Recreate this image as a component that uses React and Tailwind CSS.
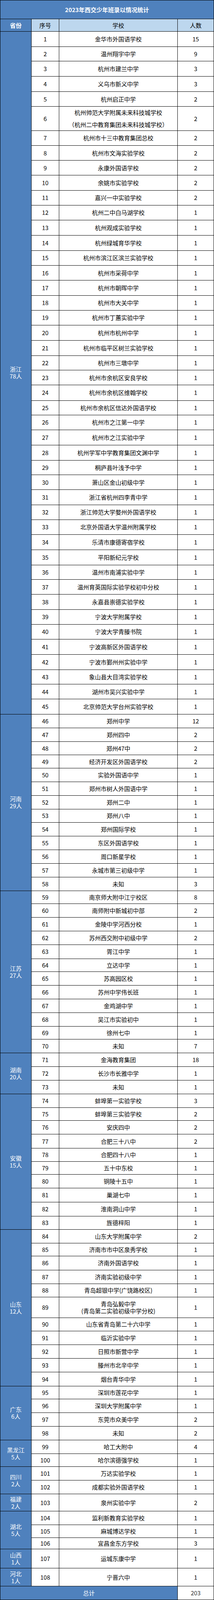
import React from "react";

const bottoms = [
  135, 178, 222, 266, 310, 380, 423, 467, 510, 554, 597, 641, 685, 729, 773,
  816, 860, 903, 947, 991, 1035, 1078, 1121, 1166, 1208, 1252, 1296, 1340, 1383,
  1426, 1470, 1513, 1557, 1601, 1645, 1688, 1731, 1775, 1818, 1862, 1906, 1950,
  1993, 2036, 2080, 2120, 2160, 2199, 2237, 2277, 2317, 2357, 2395, 2435, 2475,
  2515, 2555, 2594, 2632, 2672, 2712, 2752, 2792, 2830, 2870, 2910, 2950, 2989,
  3027, 3067, 3107, 3147, 3186, 3226, 3264, 3304, 3344, 3383, 3421, 3461, 3501,
  3542, 3581, 3621, 3659, 3699, 3739, 3778, 3838, 3877, 3917, 3957, 3997, 4037,
  4075, 4115, 4155, 4195, 4234, 4272, 4312, 4352, 4402, 4441, 4479, 4512, 4568,
  4620,
];

const groups = [
  {
    name: "浙江",
    total: "78人",
    rows: [
      ["金华市外国语学校", 15],
      ["温州翔宇中学", 9],
      ["杭州市建兰中学", 3],
      ["义乌市新义中学", 3],
      ["杭州启正中学", 2],
      [["杭州帅范大学附属未来科技城学校", "（杭州二中教育集团未来科技城学校）"], 2],
      ["杭州市十三中教育集团总校", 2],
      ["杭州市文海实验学校", 2],
      ["永康外国语学校", 2],
      ["余姚市实验学校", 2],
      ["嘉兴一中实验学校", 2],
      ["杭州二中白马湖学校", 1],
      ["杭州观成实验学校", 1],
      ["杭州绿城育华学校", 1],
      ["杭州市滨江区滨兰实验学校", 1],
      ["杭州市采荷中学", 1],
      ["杭州市朝晖中学", 1],
      ["杭州市大关中学", 1],
      ["杭州市丁蕙实验中学", 1],
      ["杭州市杭州中学", 1],
      ["杭州市临平区树兰实验学校", 1],
      ["杭州市三墩中学", 1],
      ["杭州市余杭区安良学校", 1],
      ["杭州市余杭区维翰学校", 1],
      ["杭州市余杭区信达外国语学校", 1],
      ["杭州市之江第一中学", 1],
      ["杭州市之江实验中学", 1],
      ["杭州学军中学教育集团文渊中学", 1],
      ["桐庐县叶浅予中学", 1],
      ["萧山区金山初级中学", 1],
      ["浙江省杭州四李青中学", 1],
      ["浙江帅范大学婺州外国语学校", 1],
      ["北京外国语大学温州附属学校", 1],
      ["乐清市康德寄宿学校", 1],
      ["平阳新纪元学校", 1],
      ["温州市南浦实验中学", 1],
      ["温州育英国际实验学校初中分校", 1],
      ["永嘉县崇德实验学校", 1],
      ["宁波大学附属学校", 1],
      ["宁波大学青滕书院", 1],
      ["宁波高新区外国语学校", 1],
      ["宁波市鄞州州实验中学", 1],
      ["象山县大目湾实验学校", 1],
      ["湖州市吴兴实验中学", 1],
      ["北京帅范大学台州实验学校", 1],
    ],
  },
  {
    name: "河南",
    total: "29人",
    rows: [
      ["郑州中学", 12],
      ["郑州四中", 2],
      ["郑州47中", 2],
      ["经济开发区外国语学校", 2],
      ["实验外国语中学", 1],
      ["郑州市树人外国语中学", 1],
      ["郑州二中", 1],
      ["郑州八中", 1],
      ["郑州国际学校", 1],
      ["东区外国语学校", 1],
      ["周口新星学校", 1],
      ["永城市第三初级中学", 1],
      ["未知", 3],
    ],
  },
  {
    name: "江苏",
    total: "27人",
    rows: [
      ["南京师大附中江宁校区", 8],
      ["南师附中新城初中部", 2],
      ["金陵中学河西分校", 1],
      ["苏州西交附中初级中学", 2],
      ["胥江中学", 1],
      ["立达中学", 1],
      ["苏高园区校", 1],
      ["苏州中学伟长班", 1],
      ["金鸡湖中学", 1],
      ["吴江市实验初中", 1],
      ["徐州七中", 1],
      ["未知", 7],
    ],
  },
  {
    name: "湖南",
    total: "20人",
    rows: [
      ["金海教育集团", 18],
      ["长沙市长雅中学", 1],
      ["未知", 1],
    ],
  },
  {
    name: "安徽",
    total: "15人",
    rows: [
      ["蚌埠第一实验学校", 3],
      ["蚌埠第三实验学校", 2],
      ["安庆四中", 2],
      ["合肥三十八中", 2],
      ["合肥四十八中", 1],
      ["五十中东校", 1],
      ["铜陵十五中", 1],
      ["巢湖七中", 1],
      ["淮南洞山中学", 1],
      ["旌德梓阳", 1],
    ],
  },
  {
    name: "山东",
    total: "12人",
    rows: [
      ["山东大学附属中学", 2],
      ["济南市市中区泉秀学校", 1],
      ["济南外国语学校", 1],
      ["济南实验初级中学", 1],
      ["青岛超银中学(广饶路校区)", 1],
      [["青岛弘毅中学", "(青岛第二实验初级中学分校)"], 1],
      ["山东省青岛第二十六中学", 1],
      ["临沂实验中学", 1],
      ["日照市新营中学", 1],
      ["滕州市北辛中学", 1],
      ["烟台青华中学", 1],
    ],
  },
  {
    name: "广东",
    total: "6人",
    rows: [
      ["深圳市莲花中学", 1],
      ["深圳大学附属中学", 1],
      ["东莞市众美中学", 2],
      ["未知", 2],
    ],
  },
  {
    name: "黑龙江",
    total: "5人",
    rows: [
      ["哈工大附中", 4],
      ["哈尔滨德强学校", 1],
    ],
  },
  {
    name: "四川",
    total: "2人",
    rows: [
      ["万达实验学校", 1],
      ["成都实验外国语学校", 1],
    ],
  },
  { name: "福建", total: "2人", rows: [["泉州实验中学", 2]] },
  {
    name: "湖北",
    total: "5人",
    rows: [
      ["监利新教育实验学校", 1],
      ["麻城博达学校", 1],
      ["宜昌金东方学校", 3],
    ],
  },
  { name: "山西", total: "1人", rows: [["运城东康中学", 1]] },
  { name: "河北", total: "1人", rows: [["宁晋六中", 1]] },
];

// assign global indexes and reference heights up front
let k = 0;
const indexed = groups.map((g) => {
  const rows = g.rows.map((r) => {
    const idx = k++;
    const prev = idx === 0 ? 91 : bottoms[idx - 1];
    return { idx, school: r[0], count: r[1], h: bottoms[idx] - prev };
  });
  const total = rows.reduce((s, r) => s + r.h, 0);
  return { ...g, rows, height: total };
});

// each band takes its share of the page height, in proportion to the reference
const grow = (h) => ({ flex: `${h} 1 0px` });

const cell =
  "border-r border-b border-black flex items-center justify-center overflow-hidden";

function Row({ idx, school, count, h }) {
  const multi = Array.isArray(school);
  const lead = idx === 5 ? "leading-[0.75vh]" : "leading-[18px]";
  return (
    <div className="flex min-h-0 overflow-hidden" style={grow(h)}>
      <div className={`${cell} w-[71px] shrink-0`}>{idx + 1}</div>
      <div className={`${cell} w-[304px] shrink-0 text-center whitespace-nowrap`}>
        {multi ? (
          <div className={`flex flex-col items-center ${lead}`}>
            <span>{school[0]}</span>
            <span>{school[1]}</span>
          </div>
        ) : (
          <span>{school}</span>
        )}
      </div>
      <div className={`${cell} flex-1`}>{count}</div>
    </div>
  );
}

export default function App() {
  return (
    <div
      className="w-[549px] h-screen flex flex-col overflow-hidden bg-white border-l border-t border-black text-[15px] leading-[20px] text-black"
      style={{ fontFamily: '"Noto Sans CJK SC", "Noto Sans", sans-serif' }}
    >
      <div className="flex min-h-0" style={grow(55)}>
        <div className="flex-1 bg-[#4f81bd] border-r border-b border-black flex items-center justify-center text-white font-bold text-[15px]">
          2023年西交少年班录以情况统计
        </div>
      </div>
      <div className="flex min-h-0" style={grow(36)}>
        <div className={`${cell} w-[80px] shrink-0 bg-[#4f81bd] text-white font-bold`}>
          省份
        </div>
        <div className={`${cell} w-[71px] shrink-0 bg-[#bdd7ee]`}>序号</div>
        <div className={`${cell} w-[304px] shrink-0 bg-[#bdd7ee]`}>学校</div>
        <div className={`${cell} flex-1 bg-[#bdd7ee]`}>人数</div>
      </div>
      {indexed.map((g) => (
        <div className="flex min-h-0 overflow-hidden" key={g.name} style={grow(g.height)}>
          <div
            className={`${cell} w-[80px] shrink-0 bg-[#4f81bd] text-white flex-col leading-[18px]`}
          >
            <span>{g.name}</span>
            <span>{g.total}</span>
          </div>
          <div className="flex-1 flex flex-col min-h-0">
            {g.rows.map((r) => (
              <Row key={r.idx} {...r} />
            ))}
          </div>
        </div>
      ))}
      <div className="flex min-h-0" style={grow(40)}>
        <div className={`${cell} w-[455px] shrink-0 bg-[#4f81bd] text-white`}>
          总计
        </div>
        <div className={`${cell} flex-1 text-[#333333]`}>203</div>
      </div>
    </div>
  );
}
